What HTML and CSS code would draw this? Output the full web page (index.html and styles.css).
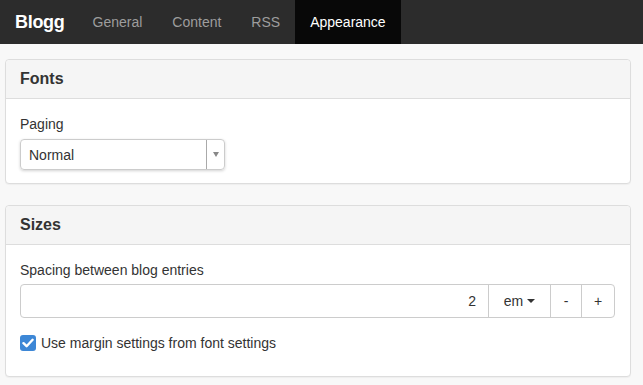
FILE: index.html
```html
<!DOCTYPE html>
<html>
<head lang="en">
    <meta charset="UTF-8">
    <title>Blogg</title>
    <link rel="stylesheet" href="styles.css">
</head>
<body>
<div class="navbar">
    <span class="brand">Blogg</span>
    <ul class="nav">
        <li>General</li>
        <li>Content</li>
        <li>RSS</li>
        <li class="active">Appearance</li>
    </ul>
</div>
<div class="main">
    <div class="panel">
        <div class="panel-heading">Fonts</div>
        <div class="panel-body">
            <label class="field-label">Paging</label>
            <div class="select">
                <span class="select-value">Normal</span>
                <span class="select-arrow"><i class="caret-small"></i></span>
            </div>
        </div>
    </div>
    <div class="panel panel-sizes">
        <div class="panel-heading">Sizes</div>
        <div class="panel-body">
            <label class="field-label">Spacing between blog entries</label>
            <div class="input-group">
                <span class="input">2</span>
                <span class="btn btn-unit">em <i class="caret"></i></span>
                <span class="btn">-</span>
                <span class="btn btn-last">+</span>
            </div>
            <label class="checkbox">
                <span class="check">
                    <svg width="12" height="10" viewBox="0 0 12 10"><path d="M1.5 5.2 L4.6 8.2 L10.6 1.8" fill="none" stroke="#fff" stroke-width="2.4" stroke-linecap="round" stroke-linejoin="round"/></svg>
                </span>
                Use margin settings from font settings
            </label>
        </div>
    </div>
</div>
</body>
</html>
```

FILE: styles.css
```css
* {
    margin: 0;
    padding: 0;
    box-sizing: border-box;
}

body {
    background: #f8f8f8;
    font-family: "Liberation Sans", Arial, sans-serif;
    font-size: 14px;
    color: #333;
}

ul {
    list-style: none;
}

.navbar {
    height: 44px;
    background: #2c2c2c;
    display: flex;
    align-items: stretch;
}

.brand {
    color: #fff;
    font-size: 18px;
    font-weight: bold;
    line-height: 44px;
    padding: 0 13px 0 15px;
    letter-spacing: -0.3px;
}

.nav {
    display: flex;
}

.nav li {
    color: #9d9d9d;
    line-height: 44px;
    padding: 0 15px;
}

.nav li.active {
    background: #080808;
    color: #fff;
}

.main {
    padding: 15px 12px 0 5px;
}

.panel {
    background: #fff;
    border: 1px solid #ddd;
    border-radius: 4px;
    margin-bottom: 21px;
    box-shadow: 0 1px 1px rgba(0, 0, 0, 0.04);
}

.panel-heading {
    background: #f5f5f5;
    border-bottom: 1px solid #ddd;
    border-radius: 4px 4px 0 0;
    font-size: 16px;
    font-weight: bold;
    height: 39px;
    line-height: 38px;
    padding: 0 14px;
}

.panel-body {
    padding: 15px 14px 13px 14px;
}

.field-label {
    display: block;
    line-height: 20px;
    margin-bottom: 5px;
}

.select {
    width: 205px;
    height: 31px;
    border: 1px solid #ccc;
    border-radius: 4px;
    box-shadow: 0 1px 3px rgba(0, 0, 0, 0.18);
    display: flex;
    align-items: center;
}

.select-value {
    flex: 1;
    padding-left: 8px;
}

.select-arrow {
    width: 18px;
    height: 29px;
    border-left: 1px solid #aaa;
    display: flex;
    align-items: center;
    justify-content: center;
}

.caret-small {
    border-left: 3px solid transparent;
    border-right: 3px solid transparent;
    border-top: 5px solid #888;
}

.panel-sizes .panel-body {
    padding-top: 15px;
    padding-bottom: 23px;
}

.panel-sizes .field-label {
    margin-bottom: 4px;
}

.input-group {
    display: flex;
    height: 34px;
    border: 1px solid #ccc;
    border-radius: 4px;
    width: 595px;
}

.input {
    flex: 1;
    text-align: right;
    line-height: 32px;
    padding-right: 12px;
    border-right: 1px solid #ccc;
}

.btn {
    width: 31px;
    line-height: 32px;
    text-align: center;
    border-right: 1px solid #ccc;
}

.btn-unit {
    width: 62px;
}

.btn-last {
    width: 32px;
    border-right: none;
}

.caret {
    display: inline-block;
    vertical-align: middle;
    margin-top: -2px;
    border-left: 4px solid transparent;
    border-right: 4px solid transparent;
    border-top: 4px solid #333;
}

.checkbox {
    display: flex;
    align-items: center;
    margin-top: 15px;
    line-height: 20px;
}

.check {
    width: 16px;
    height: 16px;
    background: #3d87d6;
    border-radius: 3px;
    margin-right: 5px;
    display: flex;
    align-items: center;
    justify-content: center;
}
```
